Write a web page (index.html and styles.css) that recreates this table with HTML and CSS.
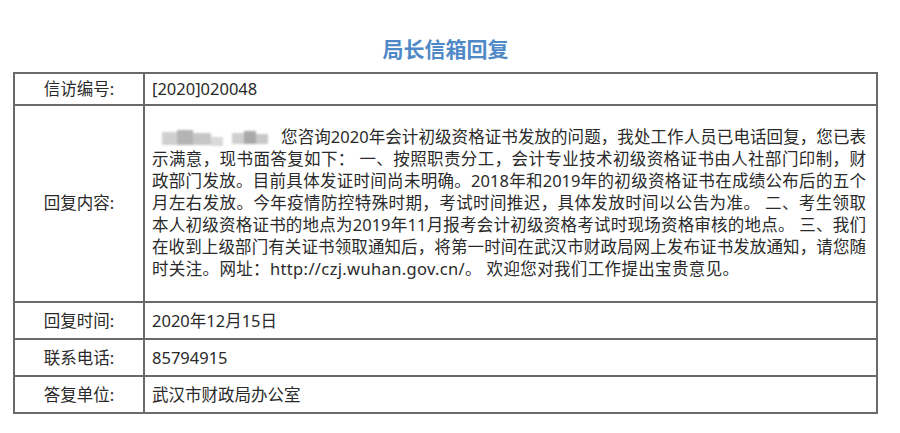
FILE: index.html
```html
<!DOCTYPE html>
<html lang="zh-CN">
<head>
<meta charset="utf-8">
<title>局长信箱回复</title>
<link rel="stylesheet" href="styles.css">
</head>
<body>
<div class="page">
  <h1 class="title">局长信箱回复</h1>
  <table class="reply">
    <tr class="row-short">
      <td class="label">信访编号:</td>
      <td class="value">[2020]020048</td>
    </tr>
    <tr class="row-content">
      <td class="label">回复内容:</td>
      <td class="value content">
        <span class="line"><span class="blur"><i class="b1"></i><i class="b2"></i><i class="b3"></i><i class="b4"></i></span><span class="blur short"><i class="b5"></i><i class="b6"></i><i class="b7"></i></span>您咨询2020年会计初级资格证书发放的问题，我处工作人员已电话回复，您已表</span>
        <span class="line">示满意，现书面答复如下： 一、按照职责分工，会计专业技术初级资格证书由人社部门印制，财</span>
        <span class="line">政部门发放。目前具体发证时间尚未明确。2018年和2019年的初级资格证书在成绩公布后的五个</span>
        <span class="line">月左右发放。今年疫情防控特殊时期，考试时间推迟，具体发放时间以公告为准。 二、考生领取</span>
        <span class="line">本人初级资格证书的地点为2019年11月报考会计初级资格考试时现场资格审核的地点。 三、我们</span>
        <span class="line">在收到上级部门有关证书领取通知后，将第一时间在武汉市财政局网上发布证书发放通知，请您随</span>
        <span class="line last">时关注。网址：http://czj.wuhan.gov.cn/。 欢迎您对我们工作提出宝贵意见。</span>
      </td>
    </tr>
    <tr class="row">
      <td class="label">回复时间:</td>
      <td class="value">2020年12月15日</td>
    </tr>
    <tr class="row">
      <td class="label">联系电话:</td>
      <td class="value">85794915</td>
    </tr>
    <tr class="row">
      <td class="label">答复单位:</td>
      <td class="value">武汉市财政局办公室</td>
    </tr>
  </table>
</div>
</body>
</html>
```
FILE: styles.css
```css
html, body {
  margin: 0;
  padding: 0;
  background: #ffffff;
}

.page {
  width: 865px;
  margin: 0 0 0 13px;
  padding-top: 34px;
  font-family: "Noto Sans", "Noto Sans CJK SC", "Microsoft YaHei", sans-serif;
  color: #2a2a2a;
}

.title {
  margin: 0 0 10px 0;
  text-align: center;
  font-family: "Noto Sans CJK SC", sans-serif;
  font-size: 21px;
  line-height: 28px;
  font-weight: 700;
  color: #4f89c7;
}

.reply {
  width: 865px;
  border-collapse: collapse;
  font-size: 16.5px;
  line-height: 22px;
}

.reply td {
  border: 2px solid #6a6a6a;
  vertical-align: middle;
}

.label {
  width: 128px;
  text-align: center;
  padding: 0;
}

.value {
  padding: 0 7px;
}

.content {
  padding-right: 10px;
}

.line {
  display: block;
  white-space: nowrap;
  text-align: justify;
  text-align-last: justify;
  text-justify: inter-character;
}

.line.last {
  text-align: left;
  text-align-last: left;
  letter-spacing: 0.35px;
}

.row-short td {
  padding-top: 4px;
  padding-bottom: 4px;
}

.row-content td {
  padding-top: 20px;
  padding-bottom: 21px;
}

.row td {
  padding-top: 7px;
  padding-bottom: 6px;
}

.blur {
  display: inline-block;
  position: relative;
  width: 66px;
  height: 16px;
  margin-left: 10px;
  margin-right: 4px;
  vertical-align: -3px;
  filter: blur(1.3px);
}

.blur.short {
  width: 36px;
  margin-left: 0;
  margin-right: 13px;
}

.blur i {
  position: absolute;
  display: block;
}

.b1 { left: 0; top: 2px; width: 15px; height: 13px; background: #d0d0d0; }
.b2 { left: 15px; top: 0; width: 16px; height: 15px; background: #b4b4b4; }
.b3 { left: 31px; top: 3px; width: 18px; height: 12px; background: #c6c6c6; }
.b4 { left: 49px; top: 7px; width: 12px; height: 9px; background: #dadada; }
.b5 { left: 0; top: 3px; width: 12px; height: 11px; background: #cfcfcf; }
.b6 { left: 12px; top: 1px; width: 12px; height: 13px; background: #a9a9a9; }
.b7 { left: 24px; top: 4px; width: 12px; height: 10px; background: #c8c8c8; }
```
